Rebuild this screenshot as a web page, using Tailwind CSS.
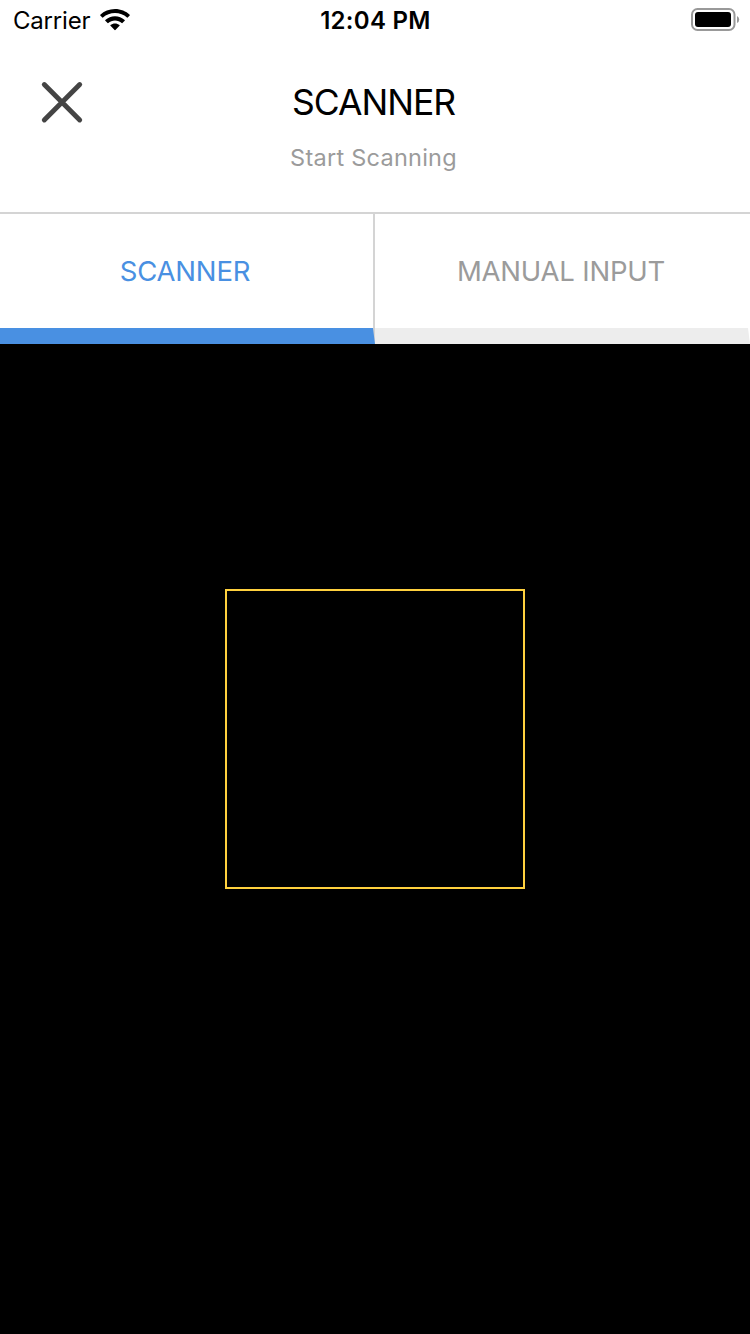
<!DOCTYPE html>
<html lang="en">
<head>
<meta charset="utf-8">
<title>Scanner</title>
<script src="https://cdn.jsdelivr.net/npm/@tailwindcss/browser@4"></script>
</head>
<body class="flex h-[1334px] w-[750px] flex-col overflow-hidden bg-white font-['Inter','Liberation_Sans',sans-serif] text-black">
  <div class="grid h-10 shrink-0 grid-cols-3 items-start">
    <div class="flex items-start pl-[13px]">
      <span class="w-[86.500px] text-2xl leading-[42px] tracking-[-0.2px] whitespace-nowrap">Carrier</span>
      <svg class="mt-[9px] h-[22px] w-[30px]" viewBox="0 0 30 22" fill="currentColor">
        <path d="M15 0C9.200 0 4 2.200 .3 5.800Q0 6.200 .3 6.500L2.300 8.500Q2.700 8.800 3 8.500C6.200 5.500 10.400 3.900 15 3.900S23.800 5.500 27 8.500Q27.300 8.800 27.700 8.500L29.700 6.500Q30 6.200 29.700 5.800C26 2.200 20.800 0 15 0Z"/>
        <path d="M15 7.200C11.300 7.200 8 8.600 5.300 11Q4.900 11.400 5.300 11.800L7.600 14Q7.900 14.300 8.300 14C10.100 12.300 12.400 11.400 15 11.400S19.900 12.300 21.700 14Q22.100 14.300 22.400 14L24.700 11.800Q25.100 11.400 24.700 11C22 8.600 18.700 7.200 15 7.200Z"/>
        <path d="M15 14.400C13.300 14.400 11.800 15 10.500 16Q10.100 16.400 10.500 16.800L14.600 21Q15 21.300 15.400 21L19.500 16.800Q19.900 16.400 19.500 16C18.200 15 16.700 14.400 15 14.400Z"/>
      </svg>
    </div>
    <div class="pl-px text-center text-2xl leading-[42px] font-semibold tracking-[0.3px] whitespace-nowrap">12:04 PM</div>
    <div class="flex justify-end pt-2 pr-[10px]">
      <svg class="h-6 w-[50px]" viewBox="0 0 50 24">
        <rect x="2" y="1" width="42.500" height="21" rx="5.500" fill="none" stroke="#999" stroke-width="2"/>
        <rect x="5" y="4" width="36" height="15" rx="3" fill="#000"/>
        <path d="M47 8Q49.200 9 49.200 11.500T47 15Z" fill="#999"/>
      </svg>
    </div>
  </div>
  <header class="grid h-[174px] shrink-0 grid-cols-[125px_1fr_125px] border-b-2 border-[#d4d4d4] pt-10">
    <svg class="ml-10 h-11 w-11" viewBox="0 0 44 44" fill="none" stroke="#444" stroke-width="4.900" stroke-linecap="round">
      <path d="M4.300 4.500L39.700 40M39.700 4.500L4.300 40"/>
    </svg>
    <div class="text-center whitespace-nowrap">
      <h1 class="pr-[3px] text-[35.500px] leading-[45px] font-[380] tracking-[-1px]">SCANNER</h1>
      <p class="mt-[14px] pr-[3px] text-[23.500px] leading-[37px] font-[380] tracking-[0.25px] text-[#9b9b9b]">Start Scanning</p>
    </div>
  </header>
  <nav class="grid h-[130px] shrink-0 grid-cols-2 text-center text-[27.500px] leading-[115px] font-[380] whitespace-nowrap">
    <div class="h-[130px] border-r-2 border-b-16 border-r-[#d4d4d4] border-b-[#4990e2] pr-[3px] tracking-[-0.2px] text-[#4990e2]">SCANNER</div>
    <div class="h-[130px] border-r-2 border-b-16 border-r-white border-b-[#ededed] pr-px tracking-[-0.2px] text-[#9b9b9b]">MANUAL INPUT</div>
  </nav>
  <main class="flex grow justify-center bg-black pt-[245px]">
    <div class="size-[300px] border-2 border-[#ffd13e]"></div>
  </main>
</body>
</html>
